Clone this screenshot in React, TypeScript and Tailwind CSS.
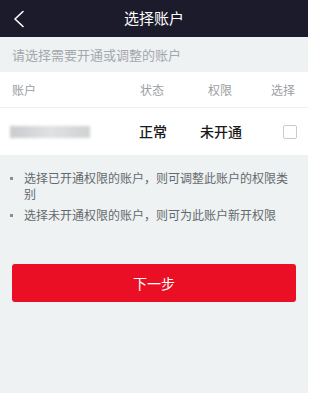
const font = { fontFamily: '"Noto Sans CJK SC", "Noto Sans", sans-serif' };

export default function App() {
    return (
        <div className="w-[308px] h-[393px] bg-[#eef2f3] overflow-hidden" style={font}>
            <header className="h-[37px] bg-[#1c1b2b] flex items-center relative">
                <svg className="absolute left-[13px] top-[10px]" width="12" height="18" viewBox="0 0 12 18" fill="none">
                    <polyline points="10,1.5 2,9 10,16.5" stroke="#fff" strokeWidth="1.6" strokeLinecap="round" strokeLinejoin="round" />
                </svg>
                <h1 className="flex-1 text-center text-white text-[15px]">选择账户</h1>
            </header>

            <p className="h-[35px] flex items-center px-3 text-[13px] text-[#a4a8ab]">请选择需要开通或调整的账户</p>

            <section className="bg-white">
                <div className="h-[36px] flex items-center text-[12px] text-[#9b9ea2] border-b border-[#eef0f1]">
                    <span className="pl-3 w-[140px]">账户</span>
                    <span className="w-[67px]">状态</span>
                    <span className="w-[64px] pl-[1px]">权限</span>
                    <span>选择</span>
                </div>
                <div className="h-[47px] flex items-center">
                    <div className="w-[139px] pl-[10px]">
                        <div className="w-[80px] h-[12px] bg-gradient-to-r from-[#c9cbce] via-[#dfe1e3] to-[#cfd1d3] blur-[1.5px]" />
                    </div>
                    <span className="w-[61px] text-[14px] text-[#1a1a1a] font-medium">正常</span>
                    <span className="w-[83px] text-[14px] text-[#1a1a1a] font-medium">未开通</span>
                    <span className="w-[14px] h-[14px] border border-[#c8cacd] rounded-[2px]" />
                </div>
            </section>

            <ul className="pl-[10px] pr-[12px] pt-[15px] text-[12px] text-[#65696c] leading-[16px] space-y-[5px]">
                <li className="flex">
                    <span className="shrink-0 w-[3px] h-[3px] mt-[7px] mr-[11px] bg-[#8a8e91]" />
                    <span>选择已开通权限的账户，则可调整此账户的权限类别</span>
                </li>
                <li className="flex">
                    <span className="shrink-0 w-[3px] h-[3px] mt-[7px] mr-[11px] bg-[#8a8e91]" />
                    <span>选择未开通权限的账户，则可为此账户新开权限</span>
                </li>
            </ul>

            <div className="px-3 mt-[41px]">
                <button className="w-full h-[38px] bg-[#ea0f25] rounded-[3px] text-white text-[14px]">下一步</button>
            </div>
        </div>
    );
}
